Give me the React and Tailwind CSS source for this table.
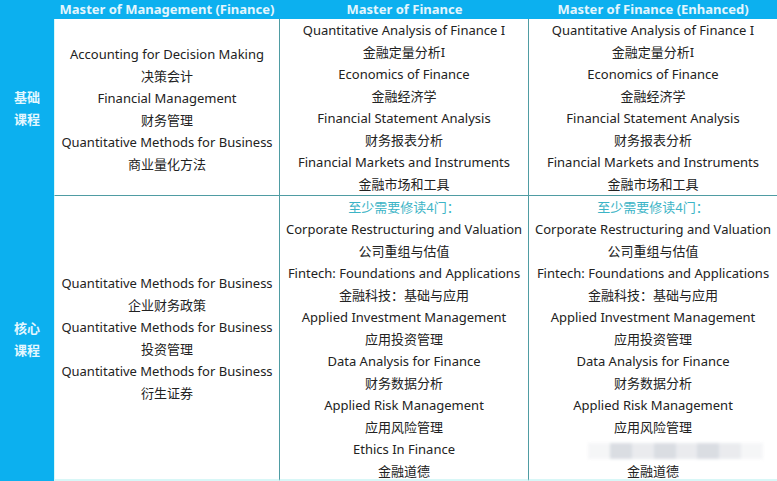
import React from "react";

const font = { fontFamily: '"Noto Sans", "Noto Sans CJK SC", sans-serif' };

const basic = [
    ["Accounting for Decision Making", "决策会计", "Financial Management", "财务管理", "Quantitative Methods for Business", "商业量化方法"],
    ["Quantitative Analysis of Finance I", "金融定量分析I", "Economics of Finance", "金融经济学", "Financial Statement Analysis", "财务报表分析", "Financial Markets and Instruments", "金融市场和工具"],
];

const core1 = ["Quantitative Methods for Business", "企业财务政策", "Quantitative Methods for Business", "投资管理", "Quantitative Methods for Business", "衍生证券"];

const core2 = [
    "Corporate Restructuring and Valuation",
    "公司重组与估值",
    "Fintech: Foundations and Applications",
    "金融科技：基础与应用",
    "Applied Investment Management",
    "应用投资管理",
    "Data Analysis for Finance",
    "财务数据分析",
    "Applied Risk Management",
    "应用风险管理",
    "Ethics In Finance",
    "金融道德",
];

const Lines = ({ items, blurEthics }) => (
    <>
        {items.map((t, i) => (
            <div key={i} className="h-[22px] leading-[22px] whitespace-nowrap">
                {blurEthics && t === "Ethics In Finance" ? (
                    // watermark mosaic over this line
                    <span className="inline-flex ml-[45px] w-[175px] h-[16px] align-middle blur-[1.5px] opacity-80">
                        <span className="flex-1 bg-gray-100"></span>
                        <span className="flex-1 bg-gray-300"></span>
                        <span className="flex-1 bg-gray-200"></span>
                        <span className="flex-1 bg-gray-300"></span>
                        <span className="flex-1 bg-gray-200"></span>
                        <span className="flex-1 bg-gray-300"></span>
                        <span className="flex-1 bg-gray-200"></span>
                        <span className="flex-1 bg-gray-100"></span>
                    </span>
                ) : (
                    t
                )}
            </div>
        ))}
    </>
);

const Label = ({ a }) => (
    <div className="bg-[#0cb0ef] flex flex-col items-center justify-center text-[13px] font-bold leading-[22px] text-[#e3f7ff]">
        <span>{a}</span>
        <span>课程</span>
    </div>
);

export default function App() {
    return (
        <div
            style={font}
            className="w-[777px] h-[481px] overflow-hidden bg-white grid grid-cols-[54px_226px_249px_248px] grid-rows-[19px_177px_285px] text-[13px] text-[#222]"
        >
            {/* header */}
            <div className="bg-[#0cb0ef]"></div>
            {["Master of Management (Finance)", "Master of Finance", "Master of Finance (Enhanced)"].map((h) => (
                <div key={h} className="bg-[#0cb0ef] text-[#e3f6fd] font-bold text-[13px] leading-[18px] text-center whitespace-nowrap">
                    {h}
                </div>
            ))}

            {/* basic courses */}
            <Label a="基础" />
            <div className="border-l border-l-[#d8f7f7] border-r border-b border-[#4f9ca3] flex flex-col justify-center items-center pt-1">
                <Lines items={basic[0]} />
            </div>
            <div className="border-r border-b border-[#4f9ca3] flex flex-col justify-center items-center">
                <Lines items={basic[1]} />
            </div>
            <div className="border-b border-[#4f9ca3] flex flex-col justify-center items-center">
                <Lines items={basic[1]} />
            </div>

            {/* core courses */}
            <Label a="核心" />
            <div className="border-l border-l-[#d8f7f7] border-r border-b-2 border-r-[#4f9ca3] border-b-[#d8f7f7] flex flex-col justify-center items-center">
                <Lines items={core1} />
            </div>
            <div className="border-r border-b-2 border-r-[#4f9ca3] border-b-[#d8f7f7] flex flex-col items-center">
                <div className="h-[22px] leading-[22px] text-[#3cb4c6]">至少需要修读4门：</div>
                <Lines items={core2} />
            </div>
            <div className="border-b-2 border-[#d8f7f7] flex flex-col items-center">
                <div className="h-[22px] leading-[22px] text-[#3cb4c6]">至少需要修读4门：</div>
                <Lines items={core2} blurEthics />
            </div>
        </div>
    );
}
